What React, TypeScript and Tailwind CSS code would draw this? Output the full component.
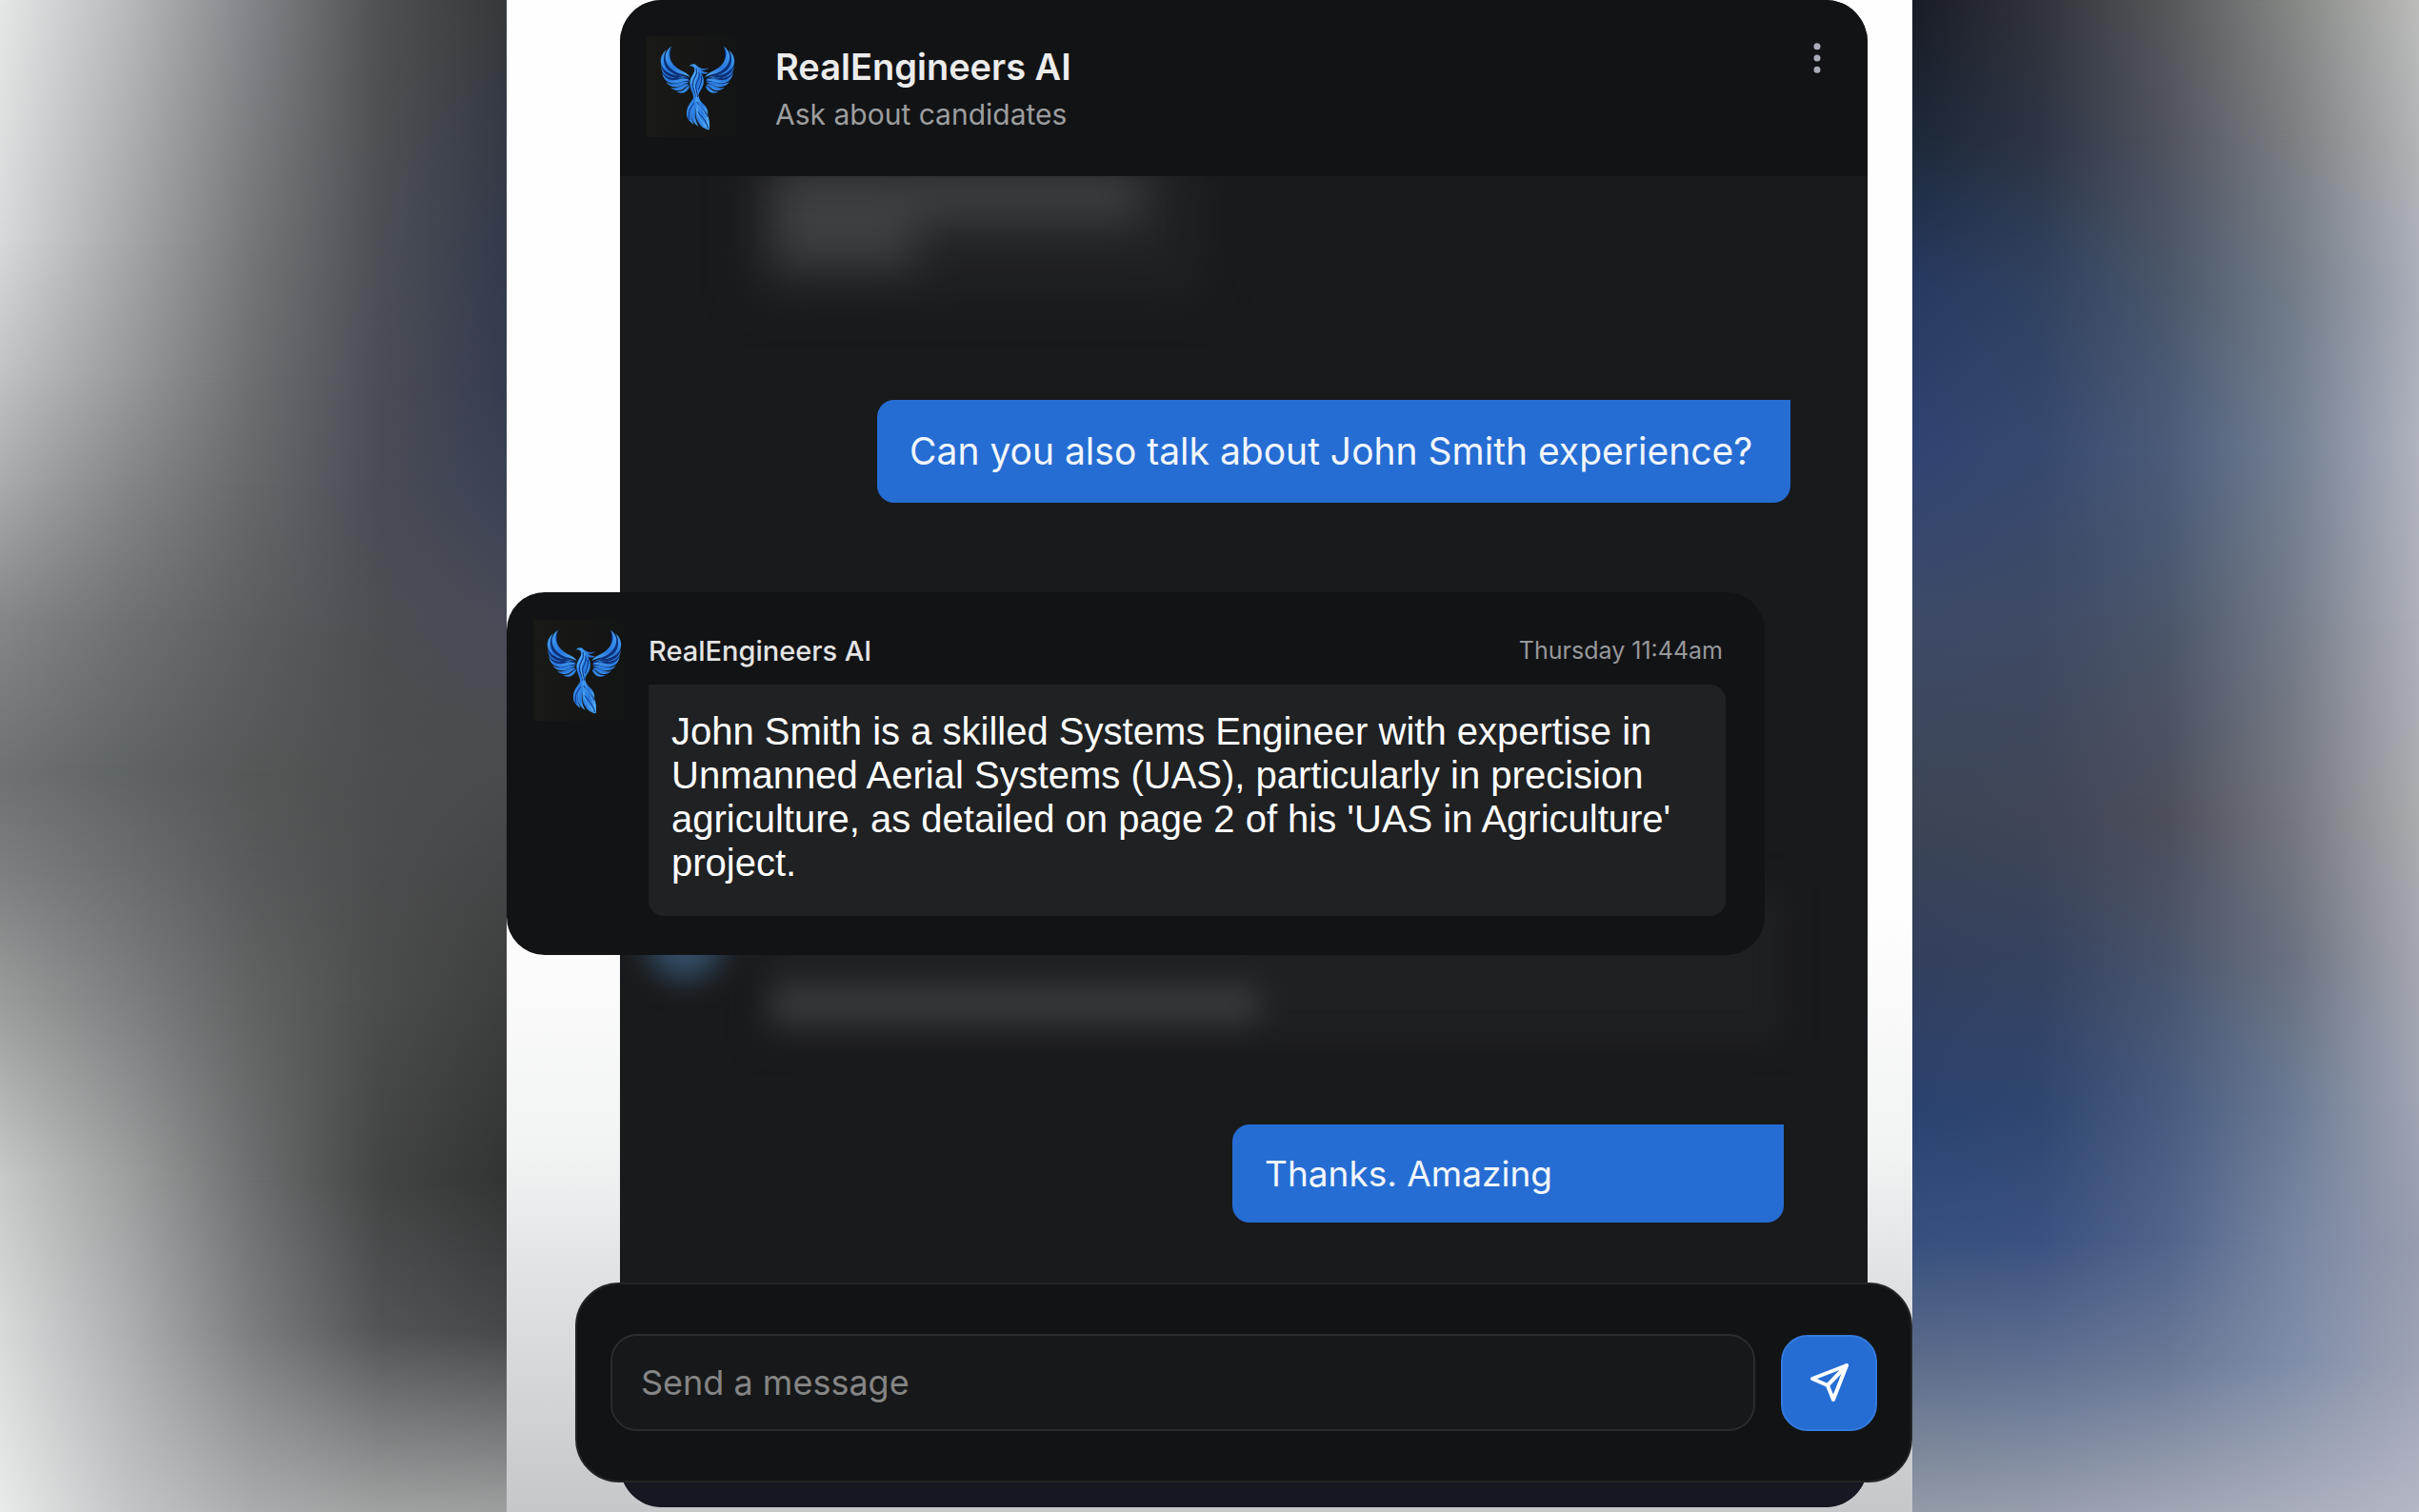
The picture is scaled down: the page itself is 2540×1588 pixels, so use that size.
import { EllipsisVertical } from "lucide-react";

const leftGlow = [
    "bg-[linear-gradient(90deg,#e6e7e7,#b8babc,#80858a,#4f5152,#35393b)]",
    "bg-[linear-gradient(90deg,#d8d9da,#a5a8aa,#747679,#4b4f55,#343a4b)] [mask-image:linear-gradient(transparent_0%,black_16%)]",
    "bg-[linear-gradient(90deg,#c0c2c4,#979a9c,#6c6e72,#4a4d55,#363c50)] [mask-image:linear-gradient(transparent_16%,black_25%)]",
    "bg-[linear-gradient(90deg,#a9abad,#84878a,#65686b,#494c55,#3b4255)] [mask-image:linear-gradient(transparent_25%,black_32%)]",
    "bg-[linear-gradient(90deg,#85878a,#6e7275,#5b5f62,#4c4e53,#484b57)] [mask-image:linear-gradient(transparent_32%,black_41%)]",
    "bg-[linear-gradient(90deg,#6e7275,#5f6466,#565757,#4c4e4f,#4a4b4d)] [mask-image:linear-gradient(transparent_41%,black_51%)]",
    "bg-[linear-gradient(90deg,#7b7d7e,#6a6d6f,#58595a,#4c4d4e,#454647)] [mask-image:linear-gradient(transparent_51%,black_57%)]",
    "bg-[linear-gradient(90deg,#999c9b,#7c8080,#616363,#4b4c4c,#3d3e3e)] [mask-image:linear-gradient(transparent_57%,black_66%)]",
    "bg-[linear-gradient(90deg,#c8cac9,#9ea0a0,#6c6f6f,#434444,#323333)] [mask-image:linear-gradient(transparent_66%,black_78%)]",
    "bg-[linear-gradient(90deg,#d8dada,#adb0b1,#7b7d80,#535456,#47484a)] [mask-image:linear-gradient(transparent_78%,black_88%)]",
    "bg-[linear-gradient(90deg,#e9eaea,#c3c5c6,#aaadad,#a0a2a2,#9ea0a0)] [mask-image:linear-gradient(transparent_88%,black_100%)]",
];

const rightGlow = [
    "bg-[linear-gradient(90deg,#181c25,#30333a,#54575a,#858784,#bcbdbb)]",
    "bg-[linear-gradient(90deg,#1d2838,#2d3444,#4f535e,#7b7f83,#b3b5b7)] [mask-image:linear-gradient(transparent_0%,black_9%)]",
    "bg-[linear-gradient(90deg,#273a62,#304260,#4a566a,#727c88,#aaafba)] [mask-image:linear-gradient(transparent_9%,black_19%)]",
    "bg-[linear-gradient(90deg,#304473,#36496f,#4b5b79,#737f93,#b0b4bf)] [mask-image:linear-gradient(transparent_19%,black_30%)]",
    "bg-[linear-gradient(90deg,#3e4a67,#3f4a64,#4b566b,#747c89,#adb0ba)] [mask-image:linear-gradient(transparent_30%,black_41%)]",
    "bg-[linear-gradient(90deg,#3c4555,#3f4657,#4c4f5b,#74777f,#abacb0)] [mask-image:linear-gradient(transparent_41%,black_54%)]",
    "bg-[linear-gradient(90deg,#343f5c,#36425d,#49536a,#6b7280,#a4a7b0)] [mask-image:linear-gradient(transparent_54%,black_63%)]",
    "bg-[linear-gradient(90deg,#2b426f,#2f4670,#475b7f,#6b7a93,#a0a5b3)] [mask-image:linear-gradient(transparent_63%,black_73%)]",
    "bg-[linear-gradient(90deg,#36507e,#3b5180,#4f648b,#7885a0,#979db0)] [mask-image:linear-gradient(transparent_73%,black_82%)]",
    "bg-[linear-gradient(90deg,#5d6c8a,#5f6f90,#6a7896,#808da8,#9da3b5)] [mask-image:linear-gradient(transparent_82%,black_90%)]",
    "bg-[linear-gradient(90deg,#929aa6,#979eac,#a0a6b4,#a9aebb,#b4b7c5)] [mask-image:linear-gradient(transparent_90%,black_100%)]",
];

function Glow({ layers }: { layers: string[] }) {
    return (
        <div className="relative" aria-hidden="true">
            {layers.map((layer) => (
                <div key={layer} className={`absolute inset-0 ${layer}`} />
            ))}
        </div>
    );
}

function Wing() {
    return (
        <g>
            <path fill="#0c3078" d="M74 60C44 78 40 118 48 144C58 170 76 180 100 176L130 168L130 156C108 144 62 130 74 60Z" />
            <path d="M77 55C60 72 66 104 92 124C108 136 126 138 134 154C118 143 98 146 78 130C48 106 50 72 77 55Z" />
            <path d="M60 66C30 92 40 124 64 138C84 150 108 148 126 153C98 152 80 144 64 130C46 112 48 84 60 66Z" />
            <path d="M45 98C36 132 52 152 78 155C92 157 104 153 116 156C96 158 70 156 56 142C42 128 41 116 45 98Z" />
            <path d="M45 138C56 164 82 166 102 159C114 156 126 157 132 164C112 162 96 175 76 172C58 169 50 158 45 138Z" />
            <path d="M58 167C74 181 92 172 108 168C118 166 126 167 131 171C114 172 102 185 84 184C72 183 62 176 58 167Z" />
            <path d="M73 185C88 191 98 184 110 178C118 174 126 174 131 177C120 182 112 194 96 195C86 196 78 191 73 185Z" />
            <path d="M92 198C106 200 116 192 122 185C126 181 129 180 132 182C130 192 118 203 106 203C100 203 95 201 92 198Z" />
        </g>
    );
}

function Phoenix() {
    return (
        <svg
            viewBox="-3 24 318 318"
            className="h-[106px] w-[106px] shrink-0 bg-linear-to-r from-[#191916] to-[#121314]"
            role="img"
            aria-label="Phoenix logo"
        >
            <defs>
                <linearGradient id="feather" x1="0" y1="0" x2="1" y2="1">
                    <stop offset="0" stopColor="#46a4f2" />
                    <stop offset="0.5" stopColor="#2878e0" />
                    <stop offset="1" stopColor="#50aef2" />
                </linearGradient>
            </defs>
            <g fill="url(#feather)">
                <Wing />
                <g transform="translate(315 0) scale(-1 1)">
                    <Wing />
                </g>
                <path d="M130 119C138 110 150 109 155 117C164 126 180 130 192 123C186 132 174 132 168 130C178 140 186 136 190 140C180 145 172 142 168 140C182 158 178 180 166 196C159 206 159 214 162 226L145 226C147 206 134 194 133 174C131 150 154 140 146 123C142 118 136 117 130 119Z" />
                <path d="M146 212C144 228 124 238 123 264C122 282 130 292 146 302C136 284 134 270 142 252C148 238 154 228 152 212Z" />
                <path d="M151 214C154 230 138 246 137 268C136 286 146 300 160 308C150 288 147 272 152 254C156 240 160 230 156 214Z" />
                <path d="M154 212C158 228 164 238 177 252C190 266 199 292 194 319C176 318 159 302 153 280C149 262 156 244 150 226Z" />
                <path d="M161 212C162 226 172 234 181 243C188 252 190 260 190 270C182 256 162 244 157 224Z" />
            </g>
            <g fill="none" stroke="#0a2c78" strokeWidth="3" strokeLinecap="round">
                <path d="M154 128C160 146 142 158 142 176C142 190 150 196 152 214" />
                <path d="M161 138C168 156 152 166 152 184C152 194 157 200 157 214" />
                <path d="M169 150C173 170 163 178 161 192" />
                <path d="M158 262C168 276 186 290 190 314" />
                <path d="M156 232C162 246 180 256 188 278" />
                <path d="M146 236C130 254 126 270 132 286" />
            </g>
            <g fill="none" stroke="#6cc6fa" strokeWidth="2" strokeLinecap="round">
                <path d="M157 130C164 148 146 160 147 178C147 190 153 198 154 214" />
                <path d="M137 172C136 160 148 148 150 136" />
                <path d="M156 250C154 272 168 296 186 308" />
                <path d="M160 240C176 258 188 276 191 298" />
            </g>
        </svg>
    );
}

function PlaneIcon() {
    return (
        <svg viewBox="0 0 42 42" className="h-[42px] w-[42px]" fill="none" stroke="white" strokeWidth="4" strokeLinejoin="round" strokeLinecap="round" aria-hidden="true">
            <path d="M39 3L3 17L19 24L25 39Z" />
            <path d="M39 3L19 24" />
        </svg>
    );
}

export default function App() {
    return (
        <div className="grid min-h-screen grid-cols-[1fr_minmax(0,1476px)_1fr] overflow-hidden font-['Inter',sans-serif]">
            <Glow layers={leftGlow} />

            <main className="flex flex-col overflow-hidden bg-[linear-gradient(#fefefe_60%,#f2f3f3_76%,#e2e3e5_84%,#c6c7c9)]">
                <section className="mr-[47px] mb-[5px] ml-[119px] flex flex-1 flex-col rounded-[44px] bg-[#191a1c]">
                    <header className="relative z-10 flex h-[185px] items-start rounded-t-[44px] bg-[#121315] pt-[38px] pr-8 pl-7">
                        <Phoenix />
                        <div className="ml-[29px] flex-1 pt-2">
                            <h1 className="text-[38px] leading-[48px] font-semibold text-[#ececec]">RealEngineers AI</h1>
                            <p className="text-[30px] leading-[52px] text-[#9d9e9f]">Ask about candidates</p>
                        </div>
                        <button type="button" aria-label="More options" className="text-[#a9adb8]">
                            <EllipsisVertical className="h-[46px] w-[42px]" fill="currentColor" />
                        </button>
                    </header>

                    <div className="flex flex-1 flex-col">
                        {/* earlier reply, out of focus */}
                        <div className="-mt-8 ml-[140px] h-[157px] w-[470px] bg-[#202123] px-5 pt-6 blur-xl" aria-hidden="true">
                            <div className="h-14 w-[390px] bg-[#3e3f41]" />
                            <div className="h-12 w-[150px] bg-[#3e3f41]" />
                        </div>

                        <p className="mt-[110px] mr-[81px] flex h-[108px] w-[959px] items-center self-end rounded-[18px] rounded-tr-none bg-[#256dd3] pl-[34px] text-[39px] whitespace-nowrap text-[#f2f6fc]">
                            Can you also talk about John Smith experience?
                        </p>

                        <article className="relative z-10 mt-[94px] mr-[108px] -ml-[119px] flex h-[381px] rounded-[40px] bg-[#121315] pt-[29px] pr-[41px] pl-7">
                            <Phoenix />
                            <div className="ml-[15px] flex-1">
                                <div className="flex h-[68px] items-center justify-between pt-1 pr-[3px] pb-1.5">
                                    <h2 className="text-[29px] font-medium text-[#e4e4e4]">RealEngineers AI</h2>
                                    <time className="text-[25px] text-[#97989a]">Thursday 11:44am</time>
                                </div>
                                <p className="h-[243px] rounded-2xl rounded-tl-none bg-[#1f2123] px-6 pt-[26px] font-['Liberation_Sans',sans-serif] text-[40px] leading-[46px] text-white">
                                    John Smith is a skilled Systems Engineer with expertise in Unmanned Aerial Systems (UAS), particularly in precision agriculture, as detailed on page 2 of his 'UAS in Agriculture' project.
                                </p>
                            </div>
                        </article>

                        {/* next reply, still out of focus behind the card */}
                        <div className="-mt-[70px] mr-[90px] ml-[28px] flex h-[160px] gap-10 blur-lg" aria-hidden="true">
                            <div className="mt-4 h-[80px] w-[80px] rounded-full bg-[#34506a]" />
                            <div className="flex-1 bg-[#1f2022] pt-[104px] pl-3">
                                <div className="h-9 w-[510px] bg-[#3a3b3d]" />
                            </div>
                        </div>

                        <p className="mt-[88px] mr-[88px] flex h-[103px] w-[579px] items-center self-end rounded-[18px] rounded-tr-none bg-[#256dd3] pl-[34px] text-[37px] text-[#f2f6fc]">
                            Thanks. Amazing
                        </p>

                        <form className="relative z-10 mt-[63px] -mr-[47px] -ml-[47px] flex h-[210px] items-center gap-[27px] rounded-[46px] border-2 border-[#232425] bg-[#121315] pr-[35px] pl-[35px]">
                            <input
                                type="text"
                                aria-label="Message"
                                placeholder="Send a message"
                                className="h-[102px] min-w-0 flex-1 rounded-[28px] border-2 border-[#2b2c2d] bg-[#171819] px-[30px] text-[36px] text-white placeholder:text-[#858585]"
                            />
                            <button type="button" aria-label="Send" className="flex h-[101px] w-[101px] items-center justify-center rounded-[28px] border-2 border-[#347bdd] bg-[#256dd3]">
                                <PlaneIcon />
                            </button>
                        </form>
                        <div className="-mt-[44px] min-h-[70px] flex-1 rounded-b-[44px] bg-[#151821]" />
                    </div>
                </section>
            </main>

            <Glow layers={rightGlow} />
        </div>
    );
}
